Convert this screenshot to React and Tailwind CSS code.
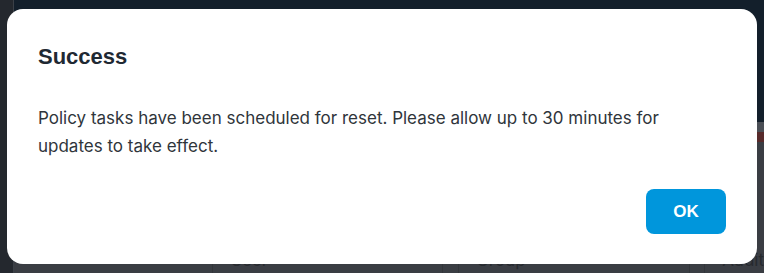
export default function App() {
  return (
    <div className="relative w-[764px] h-[273px] overflow-hidden flex bg-[#3a3d43]">
      {/* page behind the dialog */}
      <div className="w-[16px] h-full bg-[#24282e] border-r border-[#3b4047]" />
      <div className="flex-1 flex flex-col">
        <div className="h-[153px] bg-[#131f2b] flex justify-end">
          <div className="w-[10px] flex flex-col">
            <div className="h-[122px]" />
            <div className="h-[10px] bg-[#4a4e55]" />
            <div className="flex-1 bg-[#572a2b]" />
          </div>
        </div>
        <div className="flex-1 flex pt-[106px] text-[17px] text-[#26292e]" style={{ fontFamily: "Inter, sans-serif" }}>
          <div className="w-[199px] border-r border-[#32353a]" />
          <div className="w-[230px] pl-[17px] border-r border-[#32353a]">User</div>
          <div className="w-[16px] border-r border-[#32353a]" />
          <div className="w-[231px] pl-[17px] border-r border-[#32353a]">Group</div>
          <div className="w-[15px] border-r border-[#32353a]" />
          <div className="pl-[17px]">Audit</div>
        </div>
      </div>

      {/* dialog */}
      <div className="absolute left-[7px] top-[9px] w-[750px] h-[255px] rounded-[16px] bg-white flex flex-col px-[31px] pt-[34px] pb-[30px]">
        <h2 className="text-[22px] font-bold text-[#1f2933] leading-[28px]" style={{ fontFamily: '"Liberation Sans", Arial, sans-serif' }}>
          Success
        </h2>
        <p className="mt-[33px] text-[17px] leading-[28px] text-[#2f353b]" style={{ fontFamily: "Inter, sans-serif" }}>
          Policy tasks have been scheduled for reset. Please allow up to 30 minutes for
          <br />
          updates to take effect.
        </p>
        <div className="mt-auto flex justify-end">
          <button className="w-[80px] h-[45px] rounded-[8px] bg-[#0096dc] text-white text-[17px] font-bold" style={{ fontFamily: '"Liberation Sans", Arial, sans-serif' }}>
            OK
          </button>
        </div>
      </div>
    </div>
  );
}
